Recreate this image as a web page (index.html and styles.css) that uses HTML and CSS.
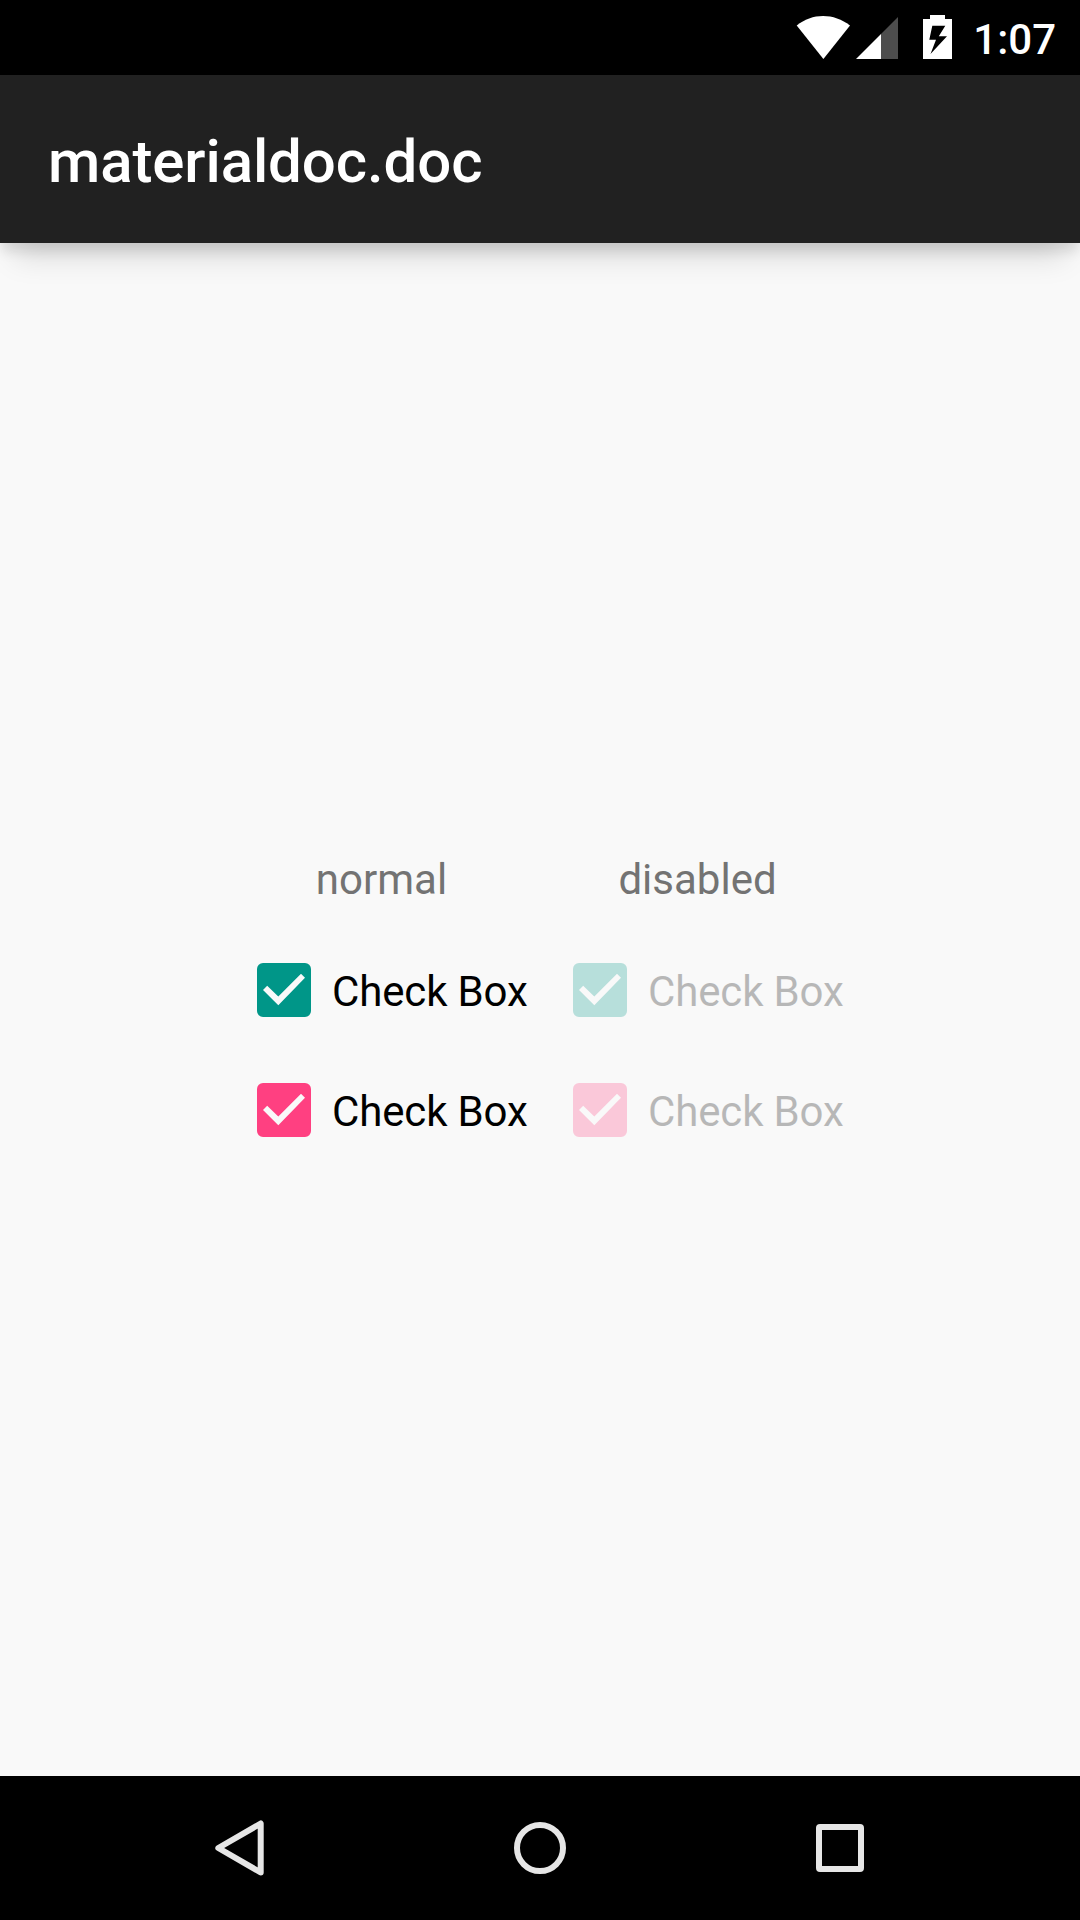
FILE: index.html
```html
<!DOCTYPE html>
<html lang="en">
<head>
<meta charset="utf-8">
<title>materialdoc.doc</title>
<link rel="stylesheet" href="styles.css">
</head>
<body>
<svg class="defs" width="0" height="0" aria-hidden="true">
  <symbol id="checkbox" viewBox="0 0 54 54">
    <path fill="currentColor" fill-rule="evenodd" d="M6 0H48a6 6 0 0 1 6 6V48a6 6 0 0 1-6 6H6a6 6 0 0 1-6-6V6a6 6 0 0 1 6-6ZM6 27L21.300 42.200L48 14.700L44 10.800L21.300 33.600L10.200 22.800Z"/>
  </symbol>
</svg>
<div class="screen">
  <header class="status-bar">
    <svg class="wifi" width="54" height="43" viewBox="0 0 54 43"><path fill="#fff" d="M0.700 9.600C16 -3.200 38 -3.200 54 9.600L27.400 43Z"/></svg>
    <svg class="signal" width="42" height="42" viewBox="0 0 42 42"><path fill="#4d4d4d" d="M42 0V42H25V17Z"/><path fill="#fff" d="M0 42L25 17V42Z"/></svg>
    <svg class="battery" width="29" height="44" viewBox="0 0 29 44"><path fill="#fff" fill-rule="evenodd" d="M7 0H22V4H29V44H0V4H7ZM9.300 10.700L6.300 24.700H13L7.500 39L24 21.300H15.800L22.300 10.700Z"/></svg>
    <span class="clock">1:07</span>
  </header>
  <div class="app-bar"><h1 class="title">materialdoc.doc</h1></div>
  <main class="content">
    <div class="grid">
      <div class="heading">normal</div>
      <div class="heading">disabled</div>
      <div class="option teal"><svg class="box"><use href="#checkbox"/></svg><span class="label">Check Box</span></div>
      <div class="option teal disabled"><svg class="box"><use href="#checkbox"/></svg><span class="label">Check Box</span></div>
      <div class="option pink"><svg class="box"><use href="#checkbox"/></svg><span class="label">Check Box</span></div>
      <div class="option pink disabled"><svg class="box"><use href="#checkbox"/></svg><span class="label">Check Box</span></div>
    </div>
  </main>
  <nav class="nav-bar">
    <svg width="60" height="60" viewBox="0 0 60 60"><path d="M8.300 30L50.700 5.500V54.500Z"/></svg>
    <svg width="60" height="60" viewBox="0 0 60 60"><circle cx="30" cy="30" r="23"/></svg>
    <svg width="60" height="60" viewBox="0 0 60 60"><rect x="9" y="9" width="42" height="42" rx="1"/></svg>
  </nav>
</div>
</body>
</html>
```
FILE: styles.css
```css
body {
  margin: 0;
  font-family: Roboto, sans-serif;
}

.defs {
  display: none;
}

.screen {
  display: flex;
  flex-direction: column;
  height: 1920px;
  overflow: hidden;
  background: #f9f9f9;
}

.status-bar {
  display: flex;
  align-items: flex-start;
  height: 75px;
  box-sizing: border-box;
  padding: 15px 24px 0 796px;
  background: #000;
}

.wifi {
  margin-top: 1px;
}

.signal {
  margin: 2px 0 0 6px;
}

.battery {
  margin-left: 25px;
}

.clock {
  margin-left: auto;
  color: #fff;
  font-size: 42px;
  font-weight: 500;
  line-height: 49px;
}

.app-bar {
  display: flex;
  align-items: center;
  height: 168px;
  box-sizing: border-box;
  padding: 6px 48px 0;
  background: #212121;
  box-shadow:
    0 9px 12px -1px rgba(0, 0, 0, 0.11),
    0 28px 28px -14px rgba(0, 0, 0, 0.13);
}

.title {
  margin: 0;
  color: #fff;
  font-size: 60px;
  font-weight: 500;
  line-height: 70px;
  letter-spacing: -0.1px;
}

.content {
  flex: 1;
  display: flex;
  align-items: center;
  justify-content: center;
  padding-bottom: 6px;
}

.grid {
  display: grid;
  grid-template-columns: 292px 292px;
  column-gap: 24px;
  row-gap: 24px;
  font-size: 42px;
  line-height: 49px;
}

.heading {
  margin: 0 1px 14px 0;
  color: #737373;
  text-align: center;
}

.option {
  display: flex;
  align-items: center;
  height: 96px;
}

.box {
  width: 54px;
  height: 54px;
  margin: 0 21px;
}

.label {
  padding-top: 2px;
  letter-spacing: -0.15px;
}

.teal .box {
  color: #009688;
}

.pink .box {
  color: #ff4081;
}

.disabled {
  opacity: 0.26;
}

.nav-bar {
  display: flex;
  align-items: center;
  justify-content: center;
  gap: 240px;
  height: 144px;
  background: #000;
}

.nav-bar svg {
  fill: none;
  stroke: #e6e6e6;
  stroke-width: 6;
  stroke-linejoin: round;
}
```
